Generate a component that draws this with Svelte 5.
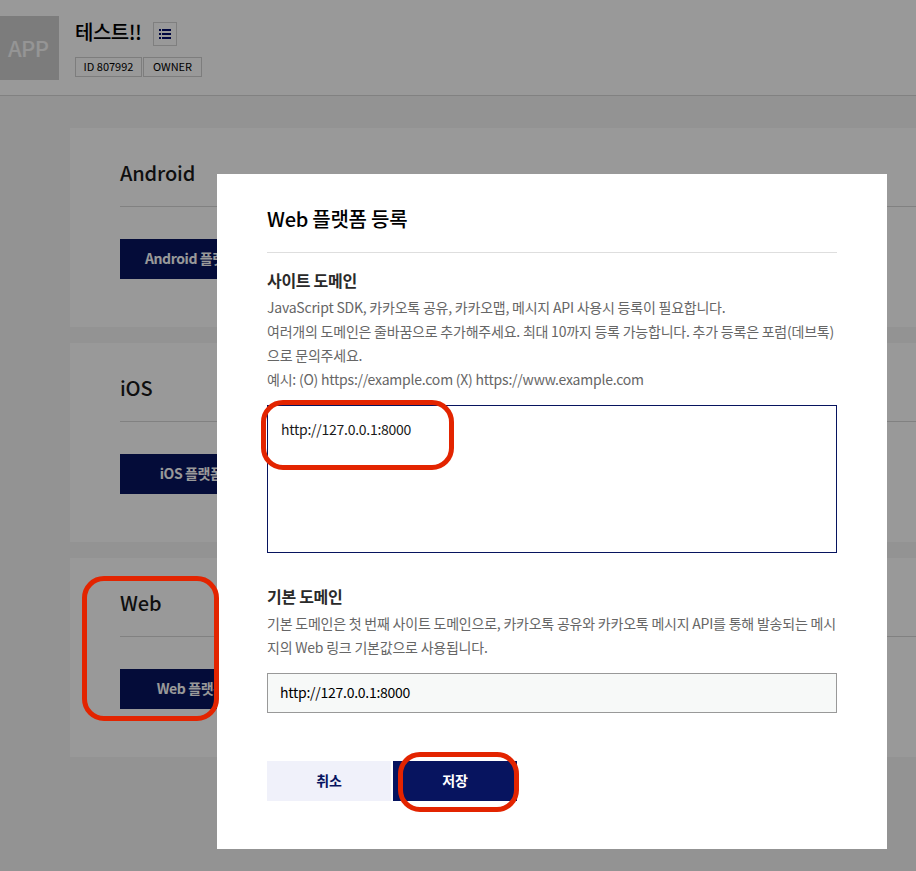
<script>
  const platforms = ['Android', 'iOS', 'Web'];
  const siteHelp = [
    'JavaScript SDK, 카카오톡 공유, 카카오맵, 메시지 API 사용시 등록이 필요합니다.',
    '여러개의 도메인은 줄바꿈으로 추가해주세요. 최대 10까지 등록 가능합니다. 추가 등록은 포럼(데브톡)',
    '으로 문의주세요.',
    '예시: (O) https://example.com (X) https://www.example.com'
  ];
  const baseHelp = [
    '기본 도메인은 첫 번째 사이트 도메인으로, 카카오톡 공유와 카카오톡 메시지 API를 통해 발송되는 메시',
    '지의 Web 링크 기본값으로 사용됩니다.'
  ];
</script>

<div class="page">
  <header>
    <div class="thumb">APP</div>
    <div class="info">
      <div class="name">
        <h1>테스트!!</h1>
        <span class="list">
          <svg width="12" height="10" viewBox="0 0 12 10" fill="#000d6b" shape-rendering="crispEdges">
            <path d="M0 0h2v2H0zM3 0h9v2H3zM0 4h2v2H0zM3 4h9v2H3zM0 8h2v2H0zM3 8h9v2H3z" />
          </svg>
        </span>
      </div>
      <div class="tags"><span class="id">ID 807992</span><span class="role">OWNER</span></div>
    </div>
  </header>
  <main>
    {#each platforms as name}
      <section>
        <h2>{name}</h2>
        <div class="action"><span class="register">{name} 플랫폼 등록</span></div>
      </section>
    {/each}
  </main>

  <div class="overlay">
    <div class="modal">
      <h3>Web 플랫폼 등록</h3>
      <h4>사이트 도메인</h4>
      <div class="help">
        {#each siteHelp as line}<p>{line}</p>{/each}
      </div>
      <div class="area">http://127.0.0.1:8000</div>
      <h4 class="second">기본 도메인</h4>
      <div class="help">
        {#each baseHelp as line}<p>{line}</p>{/each}
      </div>
      <div class="field">http://127.0.0.1:8000</div>
      <div class="buttons">
        <span class="cancel">취소</span>
        <span class="save">저장</span>
      </div>
    </div>
  </div>

  <div class="mark mark-web"></div>
  <div class="mark mark-domain"></div>
  <div class="mark mark-save"></div>
</div>

<style>
  .page {
    position: relative;
    width: 916px;
    height: 871px;
    overflow: hidden;
    background: #f6f6f6;
    color: #1a1a1a;
    font-family: 'Noto Sans CJK KR', 'Noto Sans', sans-serif;
    white-space: nowrap;
  }
  .page * { box-sizing: border-box; }
  h1, h2, h3, h4, p { margin: 0; font-weight: 500; }
  header {
    display: flex;
    height: 96px;
    padding-top: 16px;
    background: #fff;
    border-bottom: 1px solid #d8d8d8;
  }
  .thumb {
    width: 59px;
    height: 64px;
    padding-left: 8px;
    background: #cfcfcf;
    color: #f8f8f8;
    font-size: 22px;
    font-weight: 500;
    line-height: 63px;
    letter-spacing: -0.6px;
  }
  .info { padding-left: 16px; }
  .name { display: flex; height: 41px; }
  h1 { width: 78px; font-size: 20px; line-height: 31px; letter-spacing: -0.5px; color: #000; }
  .list {
    display: flex;
    align-items: center;
    justify-content: center;
    width: 24px;
    height: 24px;
    margin-top: 6px;
    border: 1px solid #d4d4d4;
  }
  .tags { display: flex; gap: 1px; font-size: 11px; line-height: 17px; text-align: center; color: #000; }
  .tags span { height: 20px; border: 1px solid #d0d0d0; }
  .id { width: 67px; }
  .role { width: 59px; }
  main { display: flex; flex-direction: column; gap: 16px; padding: 32px 0 0 70px; }
  section { height: 199px; padding: 30px 0 0 50px; background: #fff; }
  h2 { height: 49px; font-size: 20px; line-height: 30px; letter-spacing: -0.15px; border-bottom: 1px solid #d8d8d8; }
  .action { padding-top: 32px; }
  .register {
    display: block;
    width: 170px;
    height: 40px;
    background: #07145f;
    color: #fff;
    font-size: 14px;
    font-weight: 700;
    line-height: 39px;
    letter-spacing: -0.4px;
    text-align: center;
  }
  .overlay {
    position: absolute;
    inset: 0;
    padding: 174px 29px 22px 217px;
    background: rgba(0, 0, 0, 0.4);
  }
  .modal { height: 675px; padding: 30px 50px 0; background: #fff; }
  h3 { height: 49px; font-size: 20px; line-height: 30px; letter-spacing: -0.25px; color: #000; border-bottom: 1px solid #dedede; }
  h4 { margin-top: 15px; font-size: 16px; font-weight: 700; line-height: 24px; letter-spacing: -0.3px; color: #2a2a2a; }
  .help { padding-top: 3px; color: #666; font-size: 14px; line-height: 24px; letter-spacing: -0.22px; }
  .help p { font-weight: 400; }
  .area {
    height: 148px;
    margin-top: 14px;
    padding: 11px 13px;
    border: 1px solid #07145f;
    font-size: 14px;
    line-height: 24px;
    letter-spacing: -0.26px;
  }
  h4.second { margin-top: 31px; }
  .field {
    height: 40px;
    margin-top: 14px;
    padding-left: 12px;
    border: 1px solid #999;
    background: #f7f9f8;
    color: #000;
    font-size: 14px;
    line-height: 37px;
    letter-spacing: -0.26px;
  }
  .buttons { display: flex; gap: 2px; margin-top: 48px; }
  .buttons span {
    width: 124px;
    height: 40px;
    font-size: 14px;
    font-weight: 700;
    line-height: 38px;
    letter-spacing: -0.2px;
    text-align: center;
  }
  .cancel { background: #f0f1fa; color: #07145f; }
  .save { background: #07145f; color: #fff; }
  .mark { position: absolute; border: 5px solid #e32400; border-radius: 22px; }
  .mark-web { left: 82px; top: 576px; width: 137px; height: 145px; }
  .mark-domain { left: 261px; top: 400px; width: 193px; height: 70px; }
  .mark-save { left: 398px; top: 752px; width: 121px; height: 60px; }
</style>
